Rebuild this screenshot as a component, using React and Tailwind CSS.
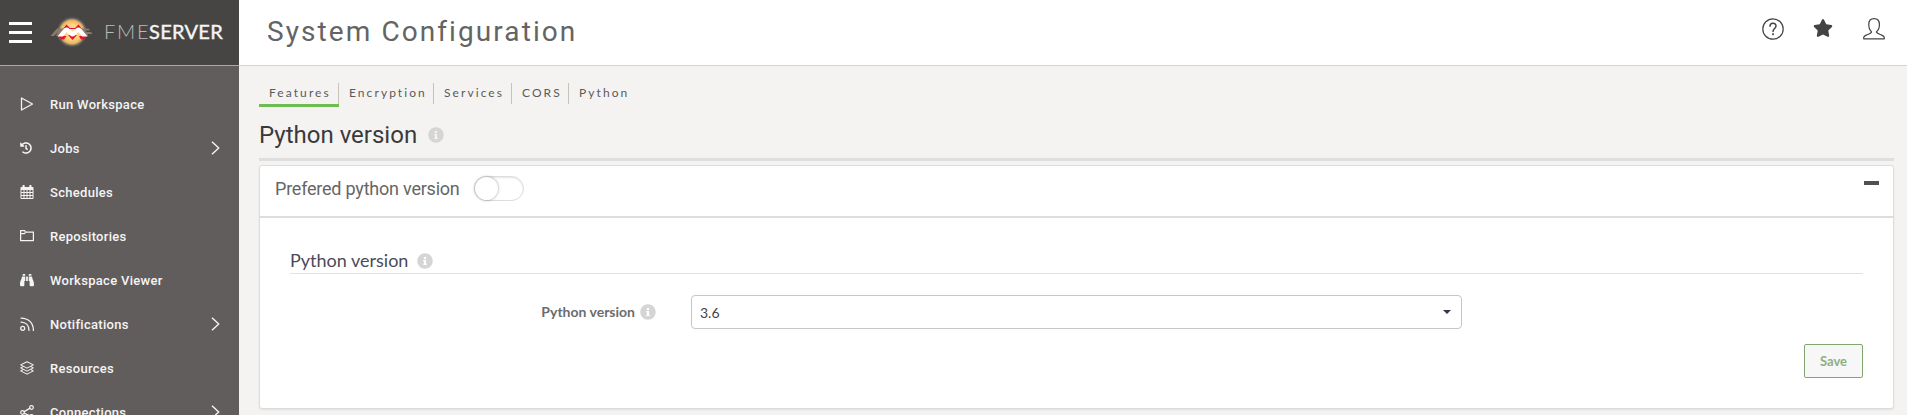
import React from "react";
import { FaInfoCircle, FaHistory, FaBinoculars, FaStar } from "react-icons/fa";

const line = { fill: "none", stroke: "currentColor", strokeWidth: 1.25, strokeLinejoin: "round", strokeLinecap: "round" };

const PlayIcon = () => (
  <svg width="14" height="14" viewBox="0 0 14 14" {...line}><path d="M1.500 1v12L12.500 7z" /></svg>
);
const CalendarIcon = () => (
  <svg width="14" height="14" viewBox="0 0 14 14">
    <path fill="currentColor" fillRule="evenodd" d="M1.3 2H2.5V1a1 1 0 0 1 2.2 0v1h4.6V1a1 1 0 0 1 2.2 0v1h1.2a.8.8 0 0 1 .8.8V13a.9.9 0 0 1-.9.9H1.4a.9.9 0 0 1-.9-.9V2.800a.8.8 0 0 1 .8-.8zM1.500 5v2h2V5zm3 0v2h2V5zm3 0v2h2V5zm3 0v2h2V5zM1.500 8v2h2V8zm3 0v2h2V8zm3 0v2h2V8zm3 0v2h2V8zM1.500 11v2h2v-2zm3 0v2h2v-2zm3 0v2h2v-2zm3 0v2h2v-2z" />
  </svg>
);
const FolderIcon = () => (
  <svg width="14" height="14" viewBox="0 0 14 14" {...line}><path d="M.6 11.500v-10h4l1 1.500h7.800v8.500zM.6 4.500h4l1-1.500" /></svg>
);
const FeedIcon = () => (
  <svg width="14" height="14" viewBox="0 0 14 14" {...line}><circle cx="2.700" cy="11.300" r="2" /><path d="M1 5c5 0 8 3.500 8 8.400M1 1c7.500 0 12.400 5 12.400 12.400" /></svg>
);
const LayersIcon = () => (
  <svg width="14" height="14" viewBox="0 0 14 14" {...line} strokeWidth="1.050"><path d="M7 .7l6.300 3.200L7 7.100.7 3.900zM2.700 5.800L.7 6.900 7 10.100l6.300-3.200-2-1.100M2.700 8.800L.7 9.900 7 13.100l6.300-3.200-2-1.100" /></svg>
);
const ShareIcon = () => (
  <svg width="14" height="14" viewBox="0 0 14 14" {...line}><circle cx="2.500" cy="7.500" r="1.800" /><circle cx="11.500" cy="2.500" r="1.800" /><circle cx="11.500" cy="11.500" r="1.800" /><path d="M4.200 6.600l5.500-3.200M4.200 8.400l5.500 2.200" /></svg>
);
const Chevron = () => (
  <svg className="mr-[19px]" width="9" height="14" viewBox="0 0 9 14" fill="none" stroke="currentColor" strokeWidth="1.400"><path d="M1 .8l6.700 6.200L1 13.200" /></svg>
);

const Logo = () => (
  <svg width="44" height="32" viewBox="0 0 44 32">
    <defs>
      <radialGradient id="sun"><stop offset="0" stopColor="#ffe7ae" /><stop offset=".6" stopColor="#ffd080" /><stop offset=".85" stopColor="#f0b862" /><stop offset="1" stopColor="#9a8767" /></radialGradient>
    </defs>
    <circle cx="22" cy="16" r="14.700" fill="#77736b" opacity=".6" />
    <circle cx="22" cy="16" r="13.200" fill="url(#sun)" />
    <path d="M.5 20L7 12.500h8L11 17l-3 3h-2l2-4-4 4zM30 12.500h8.500l1.500 2h-5l1 1.500h5l1.500 2h-5l1 2h-4z" fill="#8a7a6d" />
    <path d="M13 13l3.500-4.500L20 12h5l3.500-3.500L32 13zM8.500 20h8L14 23.500h-3zM18 19l4.500 5 4.500-5zM29 20h8l-3 3.500h-3z" fill="#e4122c" />
    <path d="M7.500 20.500L14 12.500c1.500-1.500 4-1.500 5 0l3.500 3.500 3.500-3.500c1-1.500 3.500-1.500 5 0l6.500 8h-5.500L28.500 16l-3.500 3.500c-1.500 1.300-3.500 1.300-5 0L16.500 16l-3.500 4.500z" fill="#fff" />
  </svg>
);

const nav = [
  { label: "Run Workspace", icon: <PlayIcon /> },
  { label: "Jobs", icon: <FaHistory size={12} />, more: true },
  { label: "Schedules", icon: <CalendarIcon /> },
  { label: "Repositories", icon: <FolderIcon /> },
  { label: "Workspace Viewer", icon: <FaBinoculars size={14} /> },
  { label: "Notifications", icon: <FeedIcon />, more: true },
  { label: "Resources", icon: <LayersIcon /> },
  { label: "Connections", icon: <ShareIcon />, more: true },
];

const tabs = [
  { label: "Features", width: "w-[80px]", active: true },
  { label: "Encryption", width: "w-[95px]" },
  { label: "Services", width: "w-[78px]" },
  { label: "CORS", width: "w-[57px]" },
  { label: "Python", width: "w-[70px]", last: true },
];

function Sidebar() {
  return (
    <aside className="flex w-[239px] shrink-0 flex-col bg-[#615d5d] text-[#f4f4f4]">
      <div className="flex h-[66px] shrink-0 items-start border-b border-[#a9a9a9] bg-[#474543] pl-[9px]">
        <div className="mt-[22px] flex w-[23px] flex-col gap-[6px]">
          <span className="h-[3px] bg-white" />
          <span className="h-[3px] bg-white" />
          <span className="h-[3px] bg-white" />
        </div>
        <div className="mt-4 ml-[18px]"><Logo /></div>
        <div className="mt-[17px] ml-[10px] flex font-[Lato] text-[20px] leading-7 whitespace-nowrap">
          <span className="w-[45px] font-light tracking-[1.800px] text-[#bdbcba]">FME</span>
          <span className="tracking-[0.300px] text-[#f5f5f5] [-webkit-text-stroke:0.400px]">SERVER</span>
        </div>
      </div>
      <nav className="pt-4">
        {nav.map((n) => (
          <div key={n.label} className="flex h-11 items-center">
            <span className="ml-5 flex w-[30px] items-center">{n.icon}</span>
            <span className="flex-1 pt-0.5 text-[13px] font-medium tracking-[0.300px]">{n.label}</span>
            {n.more && <Chevron />}
          </div>
        ))}
      </nav>
    </aside>
  );
}

function Header() {
  return (
    <header className="flex h-[66px] shrink-0 items-start justify-between border-b border-[#d2d6da] bg-white pr-[22px] pl-7 text-[#444]">
      <h1 className="mt-3 text-[28px] leading-10 font-normal tracking-[2.080px] text-[#646464]">System Configuration</h1>
      <div className="mt-[18px] flex items-start">
        <svg width="22" height="22" viewBox="0 0 22 22" {...line} strokeWidth="1.200"><circle cx="11" cy="11" r="10.200" /><path d="M8 8.300c0-4 6-4 6-.3 0 2.500-3 2.500-3 5.500" strokeWidth="1.500" /><path d="M11 15.800v.6" strokeWidth="1.700" /></svg>
        <FaStar className="ml-[29px]" size={20} />
        <svg className="ml-[30px]" width="22" height="22" viewBox="0 0 22 22" {...line} strokeWidth="1.200"><path d="M.7 20.800v-1.300c0-1.600 1.500-2 3-2.600 2.500-1 4.800-1.600 4.800-3.200C6.300 12 5.800 9.500 5.800 6.500 5.800 2.800 8 .7 11 .7s5.400 2.100 5.400 5.800c0 3-.6 5.500-2.900 7.200 0 1.600 2.300 2.200 4.800 3.200 1.500.6 3 1 3 2.600v1.300z" /></svg>
      </div>
    </header>
  );
}

export default function App() {
  return (
    <div className="flex h-[415px] overflow-hidden bg-[#f5f3f2] font-[Roboto,sans-serif]">
      <Sidebar />
      <div className="flex min-w-0 flex-1 flex-col">
        <Header />
        <main className="flex flex-col pr-[13px] pl-5">
          <div className="mt-[17px] flex h-6">
            {tabs.map((t) => (
              <div key={t.label} className={`${t.width} flex flex-col`}>
                <div className={`h-[21px] shrink-0 ${t.last ? "" : "border-r border-[#c9c2ba]"} pl-2.5 font-[Lato] text-[12px] leading-5 tracking-[2.080px] whitespace-nowrap text-[#5a5a5a]`}>{t.label}</div>
                {t.active && <div className="h-[3px] bg-[#6ebd50]" />}
              </div>
            ))}
          </div>
          <div className="flex h-[54px] items-center border-b-[3px] border-[#dededd]">
            <h2 className="mt-[5px] w-[157px] text-[24px] leading-8 font-normal whitespace-nowrap text-[#3a3a3a]">Python version</h2>
            <FaInfoCircle className="mt-[5px] ml-3 text-[#d5d5d5]" size={16} />
          </div>
          <section className="mt-1 h-[244px] rounded-[3px] border border-[#dcdcdc] bg-white shadow-[0_1px_2px_rgba(0,0,0,0.08)]">
            <div className="flex h-[52px] items-start border-b-2 border-[#dddddd] pl-[15px]">
              <h3 className="mt-[11px] w-[184px] text-[18px] leading-6 font-normal tracking-[-0.220px] whitespace-nowrap text-[#666]">Prefered python version</h3>
              <div className="mt-2.5 ml-[15px] h-[25px] w-[50px] rounded-full border border-[#dcdcdc] bg-white shadow-[inset_0_1px_2px_rgba(0,0,0,0.1)]">
                <div className="h-[23px] w-[23px] rounded-full bg-white shadow-[0_0_3px_rgba(0,0,0,0.4)]" />
              </div>
              <div className="mt-[15px] mr-3.5 ml-auto h-1 w-[15px] bg-[#515151]" />
            </div>
            <div className="mr-[30px] ml-[30px] font-[Lato]">
              <div className="flex h-[56px] items-end border-b border-[#e2e2e2]">
                <h4 className="mb-px text-[18px] leading-6 text-[#4a4a58]">Python version</h4>
                <FaInfoCircle className="mb-1 ml-[9px] text-[#d5d5d5]" size={16} />
              </div>
              <div className="mt-[21px] flex h-[34px] items-center">
                <div className="flex w-[401px] items-center justify-end pr-[35px]">
                  <span className="text-[14px] leading-5 font-bold text-[#6c6c6c]">Python version</span>
                  <FaInfoCircle className="ml-[5px] text-[#d5d5d5]" size={16} />
                </div>
                <div className="flex h-[34px] w-[771px] items-center justify-between rounded border border-[#c6c6c6] pr-2.5 pl-2 text-[14px] text-[#444]">
                  <span>3.6</span>
                  <svg width="8" height="4" viewBox="0 0 8 4" fill="#333747"><path d="M0 0h8L4 4z" /></svg>
                </div>
              </div>
              <div className="mt-[15px] flex justify-end">
                <button className="h-[34px] w-[59px] rounded-[2px] border border-[#82a672] bg-[#f7f7f7] pt-px text-[13px] font-bold text-[#8fae82]">Save</button>
              </div>
            </div>
          </section>
        </main>
      </div>
    </div>
  );
}
